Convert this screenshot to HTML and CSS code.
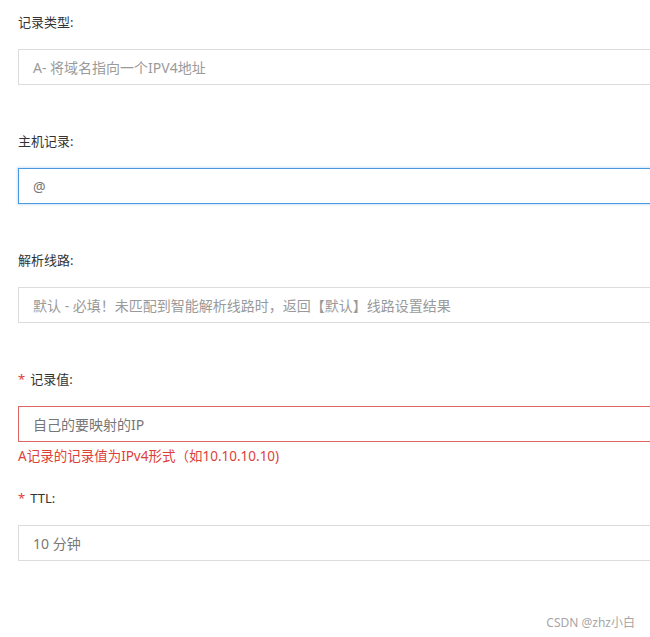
FILE: index.html
```html
<!DOCTYPE html>
<html lang="zh-CN">
<head>
<meta charset="utf-8">
<title>添加记录</title>
<link rel="stylesheet" href="styles.css">
</head>
<body>
<form class="form">
  <div class="item">
    <div class="label">记录类型:</div>
    <div class="field"><span class="placeholder">A- 将域名指向一个IPV4地址</span></div>
  </div>
  <div class="item">
    <div class="label">主机记录:</div>
    <div class="field focus"><span class="value">@</span></div>
  </div>
  <div class="item">
    <div class="label">解析线路:</div>
    <div class="field"><span class="placeholder">默认 - 必填！未匹配到智能解析线路时，返回【默认】线路设置结果</span></div>
  </div>
  <div class="item has-error">
    <div class="label"><span class="req">*</span>记录值:</div>
    <div class="field error"><span class="value">自己的要映射的IP</span></div>
    <div class="error-msg">A记录的记录值为IPv4形式（如10.10.10.10)</div>
  </div>
  <div class="item">
    <div class="label"><span class="req">*</span>TTL:</div>
    <div class="field"><span class="value">10 分钟</span></div>
  </div>
</form>
<div class="watermark">CSDN @zhz小白</div>
</body>
</html>
```
FILE: styles.css
```css
html, body {
  margin: 0;
  padding: 0;
  overflow: hidden;
  background: #fff;
}
body {
  position: relative;
  width: 650px;
  height: 637px;
  font-family: "Noto Sans", "Noto Sans CJK SC", sans-serif;
  color: #333;
}
.form {
  padding: 12px 0 0 18px;
}
.item {
  margin-bottom: 46px;
}
.item.has-error {
  margin-bottom: 22px;
}
.label {
  font-size: 13px;
  line-height: 20px;
  height: 20px;
  margin-bottom: 17px;
  color: #333;
}
.req {
  color: #e0403a;
  margin-right: 5px;
  font-size: 13px;
}
.field {
  box-sizing: border-box;
  width: 660px;
  height: 36px;
  border: 1px solid #dcdcdc;
  display: flex;
  align-items: center;
  padding-left: 14px;
  font-size: 14px;
}
.field.focus {
  border-color: #4a98de;
  box-shadow: 0 0 2px 1px rgba(74, 152, 222, 0.25);
}
.field.error {
  border-color: #e06464;
}
.placeholder {
  color: #9a9a9a;
}
.value {
  color: #777;
}
.error-msg {
  margin-top: 4px;
  font-size: 13.5px;
  line-height: 20px;
  color: #de3f3a;
}
.watermark {
  position: absolute;
  right: 15px;
  bottom: 6px;
  font-size: 12px;
  color: #a6a6a6;
}
```
